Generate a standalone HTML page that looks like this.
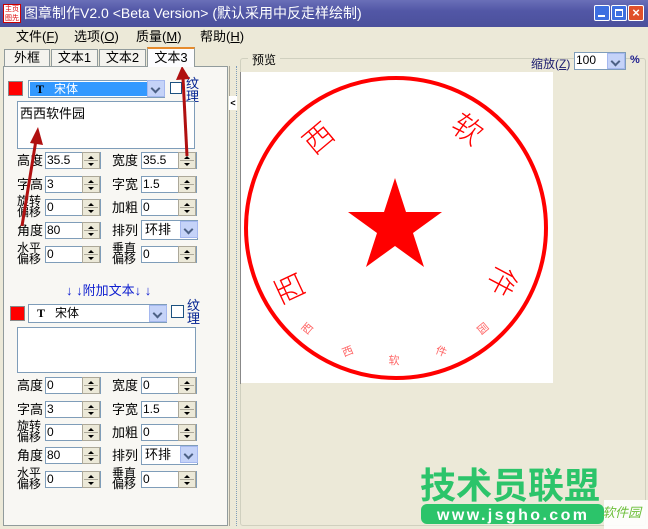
<!DOCTYPE html>
<html><head><meta charset="utf-8"><style>
*{margin:0;padding:0;box-sizing:border-box}
body{width:648px;height:529px;overflow:hidden;background:#ece9d8;font-family:"Liberation Sans","Noto Sans CJK SC",sans-serif;font-size:12px;position:relative;color:#000}
.a{position:absolute}
.title{left:0;top:0;width:648px;height:27px;background:linear-gradient(#6a6fb8,#5257a6 40%,#4b509c);color:#fff;font-size:14px;line-height:27px;padding-left:24px;white-space:nowrap}
.tb{top:5px;width:16px;height:16px;border:1px solid #fff;border-radius:2px;background:#3d6fe0}
.lbl{font-size:13px;line-height:13px}
.inp{background:#fff;border:1px solid #7f9db9;height:17px;font-size:12px;line-height:15px;padding-left:1px}
.spin{width:18px;height:17px;background:#ece9d8;border:1px solid #aca899}
.spin:before,.spin:after{content:"";position:absolute;left:5px;border-left:3px solid transparent;border-right:3px solid transparent}
.spin:before{top:3px;border-bottom:3px solid #000}
.spin:after{top:10px;border-top:3px solid #000}
.spin i{position:absolute;left:1px;right:1px;top:7px;border-top:1px solid #aca899}
.cb{width:18px;height:17px;background:#c5d3f8;border:1px solid #a5b8ef}
.cb:after{content:"";position:absolute;left:4px;top:4px;width:5px;height:5px;border-right:2px solid #4d6185;border-bottom:2px solid #4d6185;transform:rotate(45deg)}
.two{font-size:12px;line-height:11px}
.blue{color:#1020d0}
</style></head><body>
<div class="a title">图章制作V2.0 &lt;Beta Version&gt; (默认采用中反走样绘制)</div>
<div class="a" style="left:3px;top:4px;width:18px;height:19px;background:#fff;border:1px solid #c00;font-size:7px;color:#d00;line-height:9px;text-align:center">主页<br>图先</div>
<div class="a tb" style="left:594px"></div><div class="a" style="left:598px;top:15px;width:7px;height:2px;background:#fff"></div>
<div class="a tb" style="left:611px"></div><div class="a" style="left:615px;top:9px;width:8px;height:8px;border:1px solid #fff;border-top-width:2px"></div>
<div class="a tb" style="left:628px;background:#e0502a;color:#fff;font-size:13px;line-height:14px;text-align:center;font-weight:bold">×</div>
<div class="a lbl" style="left:16px;top:30px">文件(<u>F</u>)</div>
<div class="a lbl" style="left:74px;top:30px">选项(<u>O</u>)</div>
<div class="a lbl" style="left:136px;top:30px">质量(<u>M</u>)</div>
<div class="a lbl" style="left:200px;top:30px">帮助(<u>H</u>)</div>
<div class="a" style="left:4px;top:49px;width:46px;height:17px;border:1px solid #919b9c;border-bottom:none;background:#f4f3ee;text-align:center;font-size:13px;line-height:16px">外框</div>
<div class="a" style="left:51px;top:49px;width:47px;height:17px;border:1px solid #919b9c;border-bottom:none;background:#f4f3ee;text-align:center;font-size:13px;line-height:16px">文本1</div>
<div class="a" style="left:99px;top:49px;width:47px;height:17px;border:1px solid #919b9c;border-bottom:none;background:#f4f3ee;text-align:center;font-size:13px;line-height:16px">文本2</div>
<div class="a" style="left:147px;top:47px;width:48px;height:20px;border:1px solid #919b9c;border-top:2px solid #e68b2c;border-bottom:none;background:#fcfcfe;text-align:center;font-size:13px;line-height:17px;z-index:2">文本3</div>
<div class="a" style="left:3px;top:66px;width:225px;height:460px;border:1px solid #919b9c;background:#f8f7f3"></div>
<div class="a" style="left:229px;top:66px;width:8px;height:460px;border-left:1px solid #aca899;border-right:1px dotted #7f9db9"></div>
<div class="a" style="left:229px;top:96px;width:8px;height:14px;background:#fff;font-size:9px;line-height:14px;text-align:center;font-weight:bold">&lt;</div>
<div class="a" style="left:8px;top:81px;width:15px;height:15px;background:#f00;border:1px solid #888"></div>
<div class="a inp" style="left:28px;top:80px;width:137px;height:18px;padding:1px"><div style="background:#3399ff;color:#fff;height:14px;font-size:12px;line-height:14px;padding-left:6px"><b style="color:#000;font-family:'Liberation Serif',serif">T</b>&nbsp;&nbsp; 宋体</div></div>
<div class="a cb" style="left:147px;top:80px"></div>
<div class="a" style="left:170px;top:82px;width:12px;height:12px;border:1px solid #1c5180;background:#fff"></div>
<div class="a two" style="left:186px;top:77px;font-size:13px;line-height:13px;color:#002090">纹<br>理</div>
<div class="a" style="left:17px;top:101px;width:178px;height:48px;background:#fff;border:1px solid #7f9db9;font-size:13px;padding:1px 2px">西西软件园</div>
<div class="a" style="left:17px;top:327px;width:179px;height:46px;background:#fff;border:1px solid #7f9db9"></div>
<div class="a blue" style="left:66px;top:280px;font-size:13px">↓ ↓附加文本↓ ↓</div>
<div class="a" style="left:10px;top:306px;width:15px;height:15px;background:#f00;border:1px solid #888"></div>
<div class="a inp" style="left:28px;top:304px;width:139px;height:19px;font-size:12px;line-height:16px;padding-left:8px"><b style="font-family:'Liberation Serif',serif">T</b>&nbsp;&nbsp; 宋体</div>
<div class="a cb" style="left:149px;top:305px"></div>
<div class="a" style="left:171px;top:305px;width:13px;height:13px;border:1px solid #1c5180;background:#fff"></div>
<div class="a two" style="left:187px;top:299px;font-size:13px;line-height:13px;color:#002090">纹<br>理</div>
<div id="rows"></div>
<div class="a" style="left:240px;top:58px;width:406px;height:468px;border:1px solid #d0d0bf;border-radius:3px"></div>
<div class="a" style="left:248px;top:51px;background:#ece9d8;padding:0 4px;font-size:12px">预览</div>
<div class="a" style="left:531px;top:55px;font-size:12px;color:#202070">缩放(<u>Z</u>)</div>
<div class="a inp" style="left:574px;top:52px;width:52px;height:18px;font-size:12px">100</div>
<div class="a cb" style="left:607px;top:53px;height:16px"></div>
<div class="a" style="left:630px;top:54px;font-size:11px;color:#202090;font-weight:bold">%</div>
<div class="a" style="left:240px;top:72px;width:1px;height:312px;background:#888"></div>
<div class="a" style="left:241px;top:72px;width:312px;height:311px;background:#fff"></div>
<svg class="a" style="left:0;top:0" width="648" height="529">
<circle cx="396" cy="228" r="150" fill="none" stroke="#f00" stroke-width="4"/>
<polygon fill="#f00" points="395,178 406,212 442,212 413,233 424,267 395,246 366,267 377,233 348,212 384,212"/>
<g fill="#f00" font-family="Noto Sans CJK SC,sans-serif" font-weight="200" font-size="30">
<text transform="translate(320,140) rotate(-40)" text-anchor="middle" dominant-baseline="middle">西</text>
<text transform="translate(466,131) rotate(35)" text-anchor="middle" dominant-baseline="middle">软</text>
<text transform="translate(500,280) rotate(118)" text-anchor="middle" dominant-baseline="middle">件</text>
<text transform="translate(292,287) rotate(-115)" text-anchor="middle" dominant-baseline="middle">西</text>
</g>
<g fill="#f66" font-family="Noto Sans CJK SC,sans-serif" font-size="11">
<text transform="translate(308,329) rotate(-50)" text-anchor="middle" dominant-baseline="middle">西</text>
<text transform="translate(348,352) rotate(-22)" text-anchor="middle" dominant-baseline="middle">西</text>
<text transform="translate(394,361)" text-anchor="middle" dominant-baseline="middle">软</text>
<text transform="translate(441,352) rotate(22)" text-anchor="middle" dominant-baseline="middle">件</text>
<text transform="translate(482,329) rotate(50)" text-anchor="middle" dominant-baseline="middle">园</text>
</g>
<g stroke="#b01010" stroke-width="3" fill="#b01010">
<line x1="22" y1="226" x2="36" y2="140"/><polygon points="30,143 38,127 43,145" stroke="none"/>
<line x1="187" y1="156" x2="183" y2="78"/><polygon points="176,80 182,66 190,79" stroke="none"/>
</g>
<text x="420" y="498" font-size="36" fill="#2cc46a" font-family="Noto Sans CJK SC,sans-serif" font-weight="bold" textLength="180" lengthAdjust="spacingAndGlyphs">技术员联盟</text>
<rect x="421" y="504" width="183" height="20" rx="6" fill="#2cc46a"/>
<text x="512" y="520" fill="#fff" font-family="Liberation Sans,sans-serif" font-weight="bold" font-size="16" text-anchor="middle" textLength="150" lengthAdjust="spacing">www.jsgho.com</text>
<rect x="604" y="500" width="44" height="29" fill="#fff" opacity=".9"/>
<text x="602" y="517" fill="#6cbf3a" font-family="Noto Sans CJK SC,sans-serif" font-size="13" font-style="italic">软件园</text>
</svg>
<script>
var r=document.getElementById('rows'),h='';
function row(y,l1,v1,l2,v2,t1,t2,combo){
 h+=lab(17,y,l1,t1)+box(45,y-8,v1)+lab(112,y,l2,t2);
 if(combo)h+='<div class="a inp" style="left:141px;top:'+(y-10)+'px;width:57px;height:20px;font-size:13px;line-height:17px;padding-left:3px">'+v2+'</div><div class="a cb" style="left:180px;top:'+(y-9)+'px"></div>';
 else h+=box(141,y-8,v2);
}
function lab(x,y,t,two){return two?'<div class="a two" style="left:'+x+'px;top:'+(y-11)+'px">'+t+'</div>':'<div class="a lbl" style="left:'+x+'px;top:'+(y-6)+'px">'+t+'</div>';}
function box(x,y,v){return '<div class="a inp" style="left:'+x+'px;top:'+y+'px;width:56px">'+v+'</div><div class="a spin" style="left:'+(x+37)+'px;top:'+y+'px"><i></i></div>';}
function blk(y0,v){
 row(y0,'高度',v[0],'宽度',v[1]);
 row(y0+24,'字高','3','字宽','1.5');
 row(y0+47,'旋转<br>偏移','0','加粗','0',1,0);
 row(y0+70,'角度','80','排列','环排',0,0,1);
 row(y0+94,'水平<br>偏移','0','垂直<br>偏移','0',1,1);
}
blk(160,['35.5','35.5']);blk(385,['0','0']);
r.innerHTML=h;
</script>
</body></html>
